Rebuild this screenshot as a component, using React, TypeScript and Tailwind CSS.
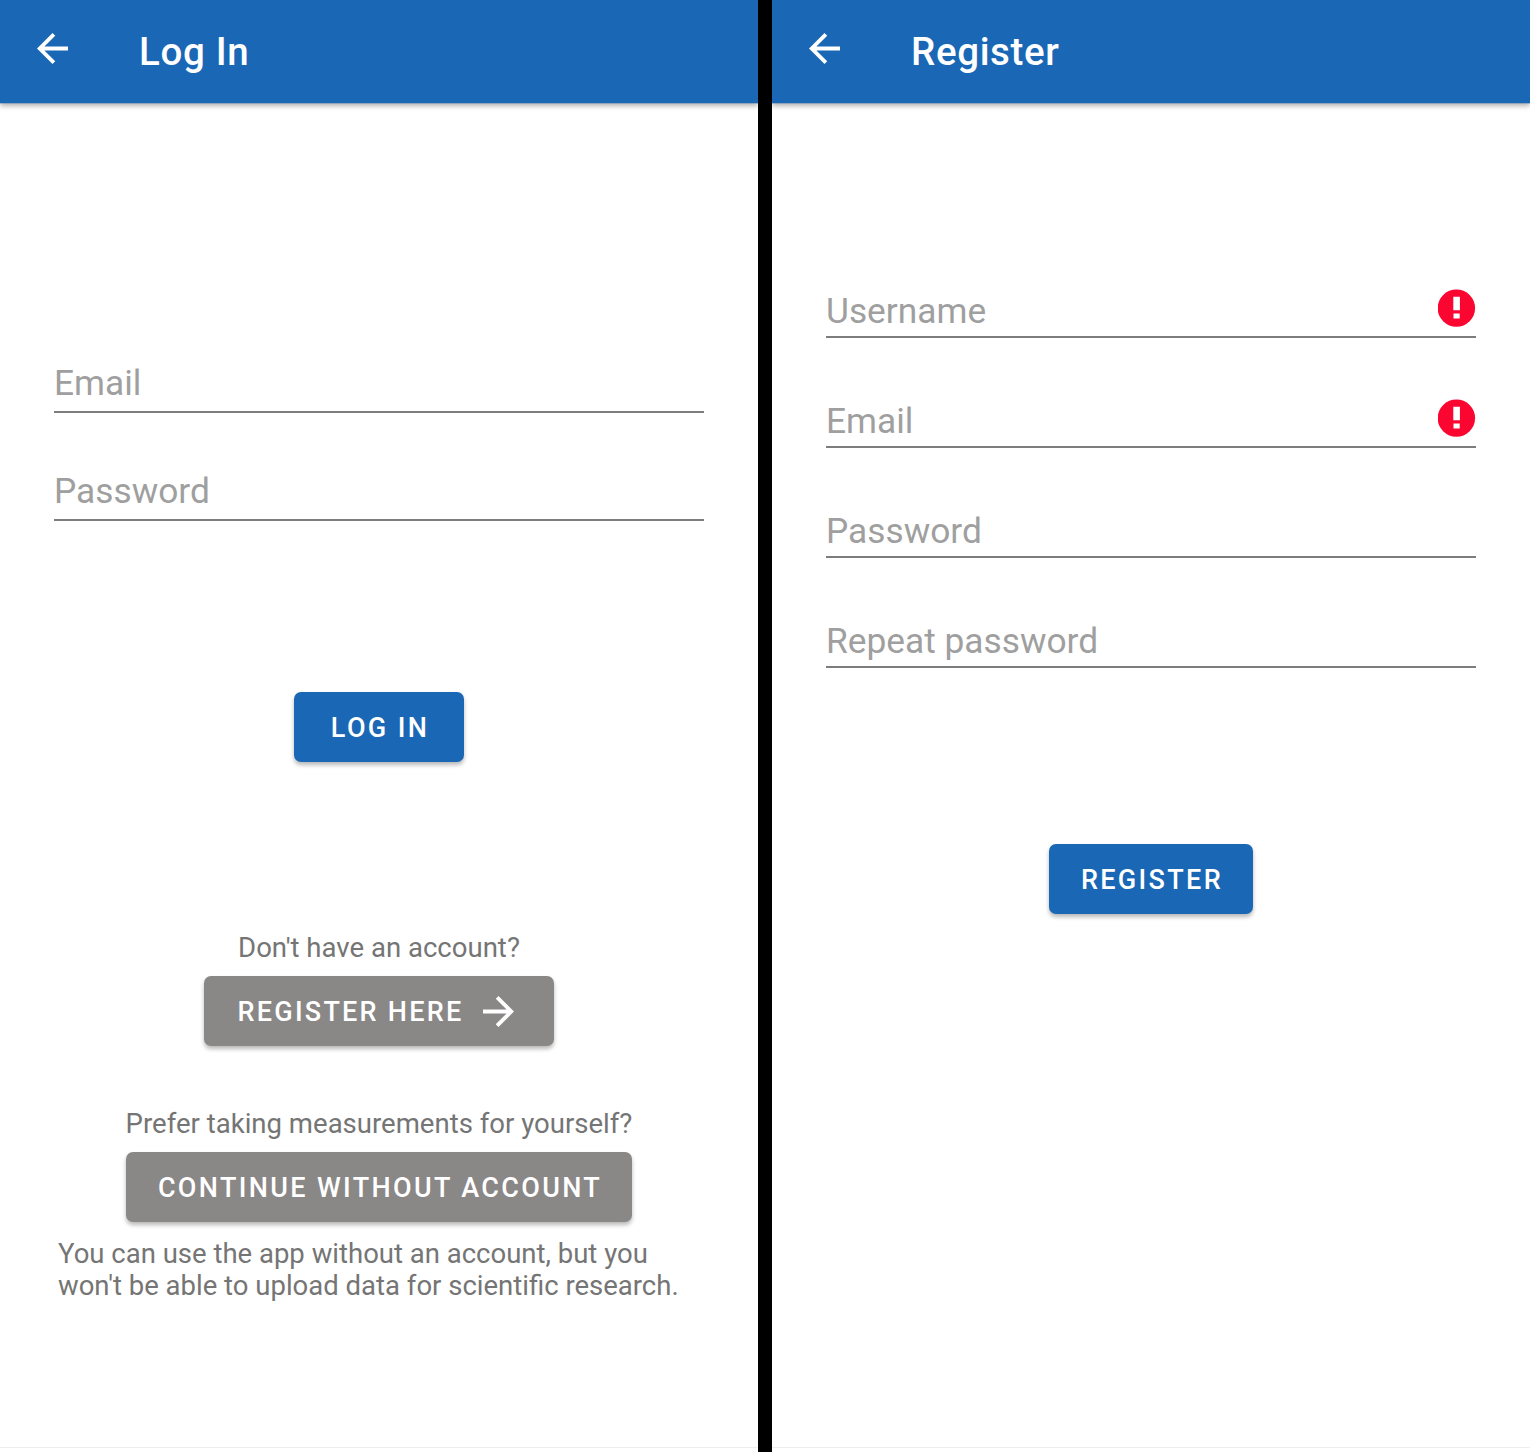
import type { ReactNode } from "react";

function Arrow({ flip = false }: { flip?: boolean }) {
  return (
    <svg viewBox="4 4 16 16" className={flip ? "size-[31px] rotate-180" : "size-[31px]"} fill="currentColor">
      <path d="M20 11H7.83l5.59-5.59L12 4l-8 8 8 8 1.41-1.41L7.83 13H20v-2z" />
    </svg>
  );
}

function TopBar({ title }: { title: string }) {
  return (
    <header className="flex h-[103px] shrink-0 items-center bg-[#1967b5] pl-[37px] text-white shadow-[0_1px_0_rgba(100,130,180,0.45),0_3px_5px_rgba(0,0,0,0.3)]">
      <div className="-mt-1.5">
        <Arrow />
      </div>
      <h1 className="mt-0.5 ml-[71px] text-[38.5px] leading-none font-medium tracking-[0.65px]">{title}</h1>
    </header>
  );
}

function Field({ label, error = false, className }: { label: string; error?: boolean; className: string }) {
  return (
    <div className={`flex items-start justify-between border-b-2 border-[#7d7d7d] text-[#9f9f9f] ${className}`}>
      <span className="pt-px text-[35.3px] leading-[42px]">{label}</span>
      {error && (
        <svg viewBox="0 0 38 38" className="size-[38px]">
          <circle cx="18.4" cy="19.1" r="18.7" fill="#fb0531" />
          <path d="M15.3 7.8h6.6v13.5h-6.6zM15.5 24.6h6.2v5h-6.2z" fill="#fff" />
        </svg>
      )}
    </div>
  );
}

function Button({ children, className }: { children: ReactNode; className: string }) {
  return (
    <button
      className={`flex h-[70px] items-center justify-center rounded-[7px] text-[27px] leading-none font-medium tracking-[2.35px] text-white shadow-[0_3px_4px_rgba(0,0,0,0.28)] ${className}`}
    >
      {children}
    </button>
  );
}

export default function App() {
  return (
    <div className="flex h-[1452px] w-[1530px] justify-between bg-black font-[Roboto,sans-serif]">
      <main className="flex w-[758px] flex-col bg-white text-[#757575]">
        <TopBar title="Log In" />
        <form className="mx-[54px] mt-[258px] flex flex-col">
          <Field label="Email" className="h-[52px]" />
          <Field label="Password" className="mt-14 h-[52px]" />
        </form>
        <Button className="mt-[171px] w-[170px] self-center bg-[#1967b5] pt-[3px] pl-0.5">LOG IN</Button>
        <p className="mt-[170px] text-center text-[27.55px] leading-8">Don't have an account?</p>
        <Button className="mt-3 w-[350px] self-center bg-[#8a8787] pr-0.5">
          <span className="mr-5 pt-[3px] tracking-[2.25px]">REGISTER HERE</span>
          <span className="mr-1">
            <Arrow flip />
          </span>
        </Button>
        <p className="mt-[62px] text-center text-[27.55px] leading-8">Prefer taking measurements for yourself?</p>
        <Button className="mt-3 w-[506px] self-center bg-[#8a8787] pt-[3px] pl-0.5">CONTINUE WITHOUT ACCOUNT</Button>
        <p className="mt-4 ml-[58px] text-[27.5px] leading-8">
          You can use the app without an account, but you
          <br />
          won't be able to upload data for scientific research.
        </p>
        <div className="mt-auto mb-1 h-px bg-[#eeeeee]" />
      </main>
      <main className="flex w-[758px] flex-col bg-white">
        <TopBar title="Register" />
        <form className="mx-[54px] mt-[186px] flex flex-col gap-[61px]">
          <Field label="Username" error className="h-[49px]" />
          <Field label="Email" error className="h-[49px]" />
          <Field label="Password" className="h-[49px]" />
          <Field label="Repeat password" className="h-[49px]" />
        </form>
        <Button className="mt-[176px] w-[204px] self-center bg-[#1967b5] pt-[3px] pl-0.5">REGISTER</Button>
        <div className="mt-auto mb-1 h-px bg-[#eeeeee]" />
      </main>
    </div>
  );
}
